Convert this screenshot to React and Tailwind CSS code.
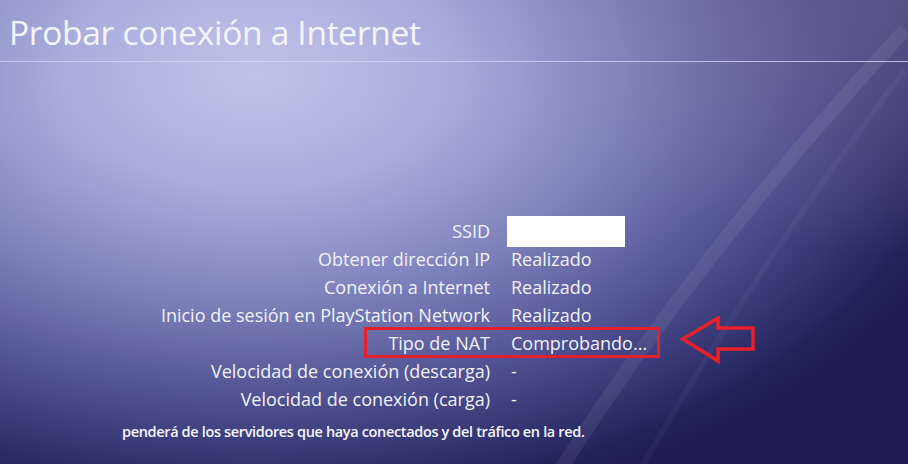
import React from 'react'

const rows = [
  { label: 'SSID', value: null },
  { label: 'Obtener dirección IP', value: 'Realizado' },
  { label: 'Conexión a Internet', value: 'Realizado' },
  { label: 'Inicio de sesión en PlayStation Network', value: 'Realizado' },
  { label: 'Tipo de NAT', value: 'Comprobando...', mark: true },
  { label: 'Velocidad de conexión (descarga)', value: '-' },
  { label: 'Velocidad de conexión (carga)', value: '-' },
]

function Arrow() {
  return (
    <svg width="80" height="50" viewBox="0 0 80 50" className="absolute left-[680px] top-[-13px]">
      <path
        d="M3 23 L38 2 L38 12 L73 12 L73 33 L38 33 L38 45 Z"
        fill="none"
        stroke="#e8202a"
        strokeWidth="3.5"
        strokeLinejoin="miter"
      />
    </svg>
  )
}

export default function App() {
  return (
    <div
      className="relative h-[464px] w-full overflow-hidden text-white bg-[radial-gradient(ellipse_85%_100%_at_28%_16%,#bfc3ea_0%,#a9addc_25%,#7f83bc_48%,#4b4d8d_72%,#23235c_92%,#1b1b50_100%)]"
      style={{ fontFamily: '"Open Sans", "Noto Sans", sans-serif' }}
    >
      {/* faint light streaks and purple tint top right */}
      <div className="absolute inset-0 bg-[radial-gradient(ellipse_45%_55%_at_100%_0%,rgba(145,130,170,0.4),transparent_100%)]" />
      <svg className="absolute inset-0 pointer-events-none" width="908" height="464" viewBox="0 0 908 464">
        <path d="M560 470 Q700 250 905 30" stroke="#ffffff" strokeOpacity="0.07" strokeWidth="14" fill="none" />
        <path d="M640 470 Q760 260 905 70" stroke="#ffffff" strokeOpacity="0.04" strokeWidth="6" fill="none" />
      </svg>

      <header className="relative h-[62px] border-b border-[#d2d4f0]/80">
        <h1 className="pl-[9px] pt-[10px] text-[33.5px] font-normal leading-[44px] tracking-[-0.3px] text-[#f4f5fb]">
          Probar conexión a Internet
        </h1>
      </header>

      <main className="relative pt-[155px]">
        {rows.map((row) => (
          <div key={row.label} className="relative flex h-[28px] items-center text-[18px] leading-[28px]">
            <div className="w-[490px] shrink-0 text-right text-[#f1f2f8]">{row.label}</div>
            {row.value === null ? (
              <div className="ml-[17px] h-[31px] w-[118px] bg-white" />
            ) : (
              <div className="ml-[21px] text-[#f1f2f8]">{row.value}</div>
            )}
            {row.mark && (
              <>
                <div className="absolute left-[364px] top-[-2px] h-[31px] w-[296px] border-[3px] border-[#e4202c]" />
                <Arrow />
              </>
            )}
          </div>
        ))}

        <p className="mt-[8px] pl-[122px] text-[14.5px] font-semibold tracking-[-0.35px] text-[#f4f5fb]">
          penderá de los servidores que haya conectados y del tráfico en la red.
        </p>
      </main>
    </div>
  )
}
